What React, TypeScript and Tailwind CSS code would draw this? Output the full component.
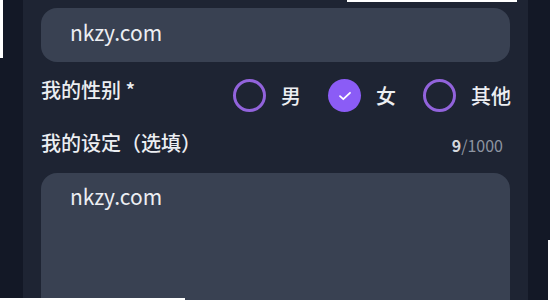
import React from 'react';

const font = { fontFamily: '"Noto Sans CJK SC", "Noto Sans", sans-serif' };

const Radio: React.FC<{ label: string; checked?: boolean }> = ({ label, checked }) => (
  <div className="flex items-center gap-[15px] whitespace-nowrap">
    {checked ? (
      <span className="w-[33px] h-[33px] rounded-full bg-[#8b5cf6] flex items-center justify-center">
        <svg width="18" height="18" viewBox="0 0 18 18" fill="none">
          <path d="M4 9.2l3.3 3 6.7-6.4" stroke="white" strokeWidth="1.8" strokeLinecap="round" strokeLinejoin="round" />
        </svg>
      </span>
    ) : (
      <span className="w-[33px] h-[33px] rounded-full border-[3px] border-[#9263dc]" />
    )}
    <span className="text-[20px] leading-[33px] font-medium text-[#eceef2]">{label}</span>
  </div>
);

export default function App() {
  return (
    <div className="relative w-[550px] h-[300px] overflow-hidden bg-[#131826] flex" style={font}>
      <div className="ml-[23px] w-[505px] h-full bg-[#1e2433] pl-[18px] pr-[18px] flex flex-col">
        <div className="mt-[8px] h-[54px] shrink-0 rounded-[16px] bg-[#394152] pl-[29px] pb-[4px] flex items-center text-[21px] text-[#eceef2]">
          nkzy.com
        </div>

        <div className="mt-[14px] flex items-start">
          <div className="text-[20px] font-medium text-[#eceef2] leading-[28px] w-[192px] shrink-0 whitespace-nowrap">我的性别 *</div>
          <div className="flex items-center gap-[27px] mt-[3px]">
            <Radio label="男" />
            <Radio label="女" checked />
            <Radio label="其他" />
          </div>
        </div>

        <div className="mt-[17px] flex items-center justify-between pr-[7px]">
          <div className="text-[20px] font-medium text-[#eceef2] leading-[28px]">我的设定（选填）</div>
          <div className="text-[16px] leading-[20px] mt-[4px]">
            <span className="text-[#d4d7dd] font-semibold">9</span>
            <span className="text-[#8d94a1]">/1000</span>
          </div>
        </div>

        <div className="mt-[16px] flex-1 rounded-t-[16px] bg-[#394152] pl-[29px] pt-[9px] text-[21px] leading-[28px] text-[#eceef2]">
          nkzy.com
        </div>
      </div>

      <div className="absolute left-0 top-0 w-[3px] h-[58px] bg-white" />
      <div className="absolute left-[347px] top-0 w-[170px] h-[2px] bg-white" />
      <div className="absolute left-0 bottom-0 w-[185px] h-[2px] bg-white" />
      <div className="absolute right-0 top-[240px] w-[2px] h-[60px] bg-white" />
    </div>
  );
}
